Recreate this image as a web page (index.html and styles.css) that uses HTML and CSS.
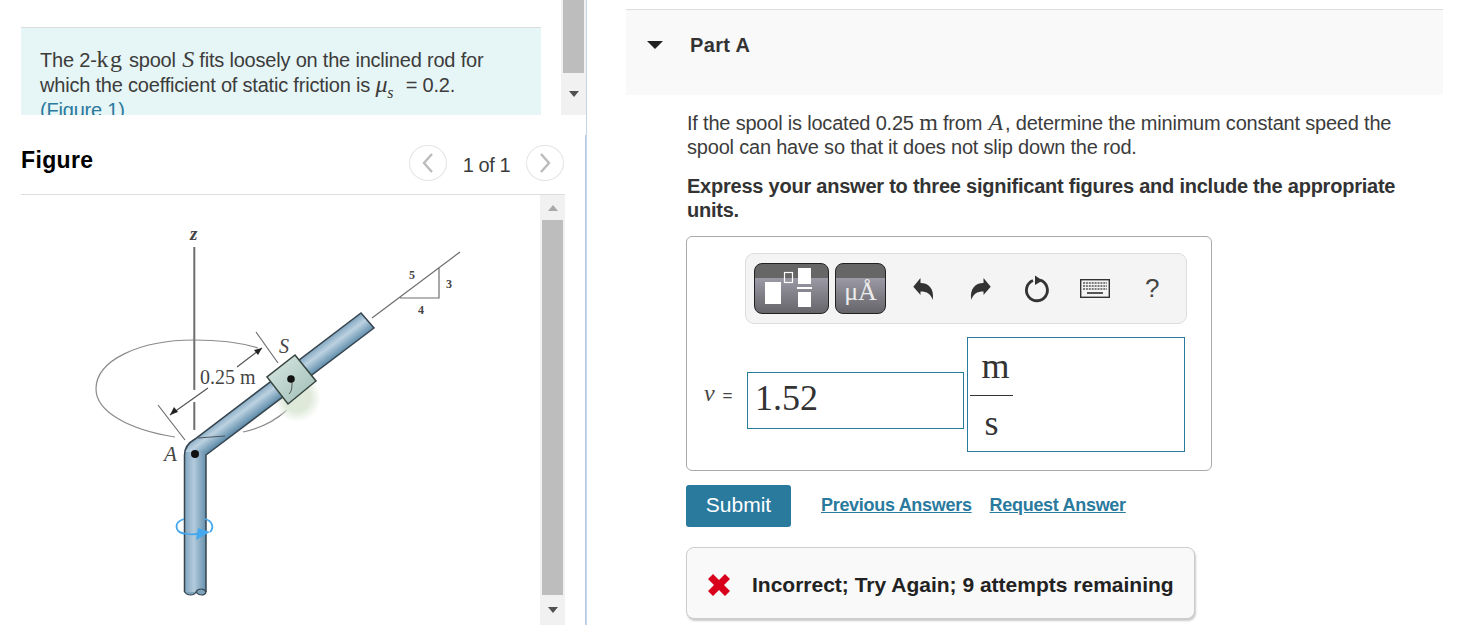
FILE: index.html
```html
<!DOCTYPE html>
<html lang="en">
<head>
<meta charset="utf-8">
<title>Part A</title>
<link rel="stylesheet" href="styles.css">
</head>
<body>
<div class="page">
  <section class="left">
    <div class="intro">
      <div class="intro-box">
        <p>The 2-<span class="rm kg">kg</span> spool <i class="mi mi-s">S</i> fits loosely on the inclined rod for which the coefficient of static friction is <i class="mi">μ<sub>s</sub></i> = 0.2.<br><a class="fig-link" href="#">(Figure 1)</a></p>
      </div>
      <div class="scroll scroll-top">
        <div class="thumb thumb-top"></div>
        <div class="arrow-zone"><span class="tri tri-down"></span></div>
      </div>
    </div>
    <div class="fig-head">
      <h2>Figure</h2>
      <div class="pager">
        <span class="circle"><svg width="14" height="22" viewBox="0 0 14 22"><path d="M11 2 L3 11 L11 20" fill="none" stroke="#bbb" stroke-width="2.4"/></svg></span>
        <span class="count">1 of 1</span>
        <span class="circle"><svg width="14" height="22" viewBox="0 0 14 22"><path d="M3 2 L11 11 L3 20" fill="none" stroke="#bbb" stroke-width="2.4"/></svg></span>
      </div>
    </div>
    <div class="fig-body">
      <svg class="diagram" width="519" height="430" viewBox="21 195 519 430">
        <defs>
          <linearGradient id="diag" gradientUnits="userSpaceOnUse" x1="361" y1="313" x2="373.5" y2="329.8">
            <stop offset="0" stop-color="#7fa5c0"/><stop offset=".4" stop-color="#bcd2e1"/><stop offset="1" stop-color="#5a89a8"/>
          </linearGradient>
          <linearGradient id="vert" gradientUnits="userSpaceOnUse" x1="184" y1="0" x2="206" y2="0">
            <stop offset="0" stop-color="#7ea3bd"/><stop offset=".45" stop-color="#b3cbdc"/><stop offset="1" stop-color="#6690ad"/>
          </linearGradient>
          <linearGradient id="spool" x1="0" y1="0" x2="1" y2="1">
            <stop offset="0" stop-color="#dbe9e4"/><stop offset="1" stop-color="#9dbcb5"/>
          </linearGradient>
          <radialGradient id="shade"><stop offset=".55" stop-color="#dfe9da"/><stop offset="1" stop-color="#dfe9da" stop-opacity="0"/></radialGradient>
        </defs>
        <g fill="none" stroke="#8a8a8a" stroke-width="1.2">
          <path d="M175 437 C130 430 96 412 96 389 C96 360 140 340 194 340 C220 340 242 343 258 348"/>
          <path d="M243 432 C262 428 276 420 287 410"/>
        </g>
        <circle cx="297" cy="398" r="24" fill="url(#shade)"/>
        <g stroke="#6e6e6e" fill="none">
          <path d="M194.300 247 V390 M194.300 402 V430" stroke-width="2"/>
          <path d="M372 318 L460 252 M400 298 H439 V268" stroke-width="1.200"/>
          <path d="M256 332 L278 363 M158 405 L185 440" stroke-width="1.200"/>
          <path d="M170 415 L208 388 M237 367 L262 348" stroke-width="1.200" stroke="#555"/>
        </g>
        <path d="M262 348 L254 350 L258 355 Z M170 415 L178 412 L174 407 Z" fill="#222"/>
        <path d="M195 439 L361 313 L374 328 L206 455 L184 455 C184 448 188 443 195 439 Z" fill="url(#diag)"/>
        <rect x="184" y="452" width="22" height="141" fill="url(#vert)"/>
        <path d="M185 592 C187 596 194 596 196 592 C199 596 205 596 206 592 C204 588 198 588 196 592" fill="#7ea3bd" stroke="#3a4852" stroke-width="1.200"/>
        <path d="M184.500 592 V455 C184.500 448 188 443 195 439 L361 313 L374 328 L206 455 V592" fill="none" stroke="#36444e" stroke-width="1.500"/>
        <path d="M198 438 L225 436" stroke="#4a5560" stroke-width="1" fill="none"/>
        <path d="M295 355 L316 381 L288 404 L267 377 Z" fill="url(#spool)" stroke="#37443f" stroke-width="1.500"/>
        <circle cx="291" cy="379" r="3.800" fill="#111"/>
        <path d="M292 382 C292 387 292 391 289 394" fill="none" stroke="#333" stroke-width=".8"/>
        <circle cx="195" cy="454" r="4" fill="#111"/>
        <path d="M184 534 C174 531 174 522 184 519 M205 519 C213 521 214 528 210 532 M180 532 C186 535 194 535 204 533" fill="none" stroke="#45a8ee" stroke-width="1.800"/>
        <path d="M198 528 L210 532 L196 540 Z" fill="#45a8ee"/>
        <text class="lbl-mid" x="200" y="384">0.25 m</text>
        <text class="lbl-it" x="279" y="353">S</text>
        <text class="lbl-z" x="190" y="240">z</text>
        <text class="lbl-it lbl-a" x="164" y="461">A</text>
        <text class="lbl-sm" x="409" y="279">5</text>
        <text class="lbl-sm" x="446" y="288">3</text>
        <text class="lbl-sm" x="418" y="314">4</text>
      </svg>
      <div class="scroll scroll-fig">
        <div class="arrow-zone zone-up"><span class="tri tri-up"></span></div>
        <div class="thumb thumb-fig"></div>
        <div class="arrow-zone zone-down"><span class="tri tri-down"></span></div>
      </div>
    </div>
  </section>

  <section class="right">
    <header class="part-head">
      <span class="tri tri-part"></span>
      <h2>Part A</h2>
    </header>
    <div class="part-body">
      <p class="q">If the spool is located 0.25 <span class="rm">m</span> from <i class="mi mi-a">A</i>, determine the minimum constant speed the spool can have so that it does not slip down the rod.</p>
      <p class="q strong">Express your answer to three significant figures and include the appropriate units.</p>
      <div class="answer">
        <div class="toolbar">
          <span class="tbtn tbtn-wide">
            <svg width="75" height="51" viewBox="754 263 75 51">
              <path d="M765 282 H781 V304 H765 Z M798 268 H811 V284 H798 Z M797 287 H812 V289 H797 Z M798 292 H811 V307 H798 Z" fill="#fff"/>
              <rect x="784.500" y="272.500" width="8" height="10" fill="none" stroke="#fff" stroke-width="1.200"/>
            </svg>
          </span>
          <span class="tbtn tbtn-unit">μÅ</span>
          <svg class="tool undo" width="24" height="26" viewBox="910 275 24 26"><path d="M912.300 285.700 L919.500 277 V282 C928 282 933.500 288 931.700 299 C930 293 926 290.500 919.500 290.500 V294 Z" fill="#333"/></svg>
          <svg class="tool redo" width="24" height="26" viewBox="910 275 24 26"><path d="M931.700 285.700 L924.500 277 V282 C916 282 910.500 288 912.300 299 C914 293 918 290.500 924.500 290.500 V294 Z" fill="#333"/></svg>
          <svg class="tool reset" width="28" height="28" viewBox="0 0 28 28"><path d="M10 5.500 A10.500 10.500 0 1 0 17 5.200" fill="none" stroke="#333" stroke-width="2.800"/><path d="M12 0.500 L19.500 5.500 L12 10 Z" fill="#333"/></svg>
          <svg class="tool kbd" width="30" height="19" viewBox="0 0 30 19"><rect x=".7" y=".7" width="28.600" height="17.600" fill="#f4f4f4" stroke="#333" stroke-width="1.400"/><path d="M3 4 H27 M3 7 H27 M3 10 H27" stroke="#555" stroke-width="1.600" stroke-dasharray="2 .9" fill="none"/><path d="M7 14 H23" stroke="#555" stroke-width="2" fill="none"/></svg>
          <span class="help">?</span>
        </div>
        <div class="entry">
          <span class="var"><i class="mi">v</i> =</span>
          <div class="field value">1.52</div>
          <div class="field units">
            <div class="frac">
              <span class="num">m</span>
              <span class="den">s</span>
            </div>
          </div>
        </div>
      </div>
      <div class="actions">
        <button class="submit" type="button">Submit</button>
        <a href="#" class="act-link">Previous Answers</a>
        <a href="#" class="act-link">Request Answer</a>
      </div>
      <div class="feedback">
        <svg width="22" height="22" viewBox="0 0 22 22"><path d="M5 0 L11 6 L17 0 L22 5 L16 11 L22 17 L17 22 L11 16 L5 22 L0 17 L6 11 L0 5 Z" fill="#d9001b"/></svg>
        <span>Incorrect; Try Again; 9 attempts remaining</span>
      </div>
    </div>
  </section>
</div>
</body>
</html>
```
FILE: styles.css
```css
html, body { margin: 0; padding: 0; background: #fff; }
body { font-family: "Liberation Sans", Arial, sans-serif; color: #3c3c3c; overflow: hidden; }
p, h2 { margin: 0; }
a { color: #2a7a9e; }
.page { display: flex; width: 1480px; height: 625px; overflow: hidden; }

.left { position: relative; width: 586px; height: 625px; border-right: 1px solid #c3d5e6; flex: none; }
.left::after { content: ""; position: absolute; right: 0; top: 135px; bottom: 0; width: 1px; background: #b8cde0; }

.intro { display: flex; height: 115px; padding-left: 21px; }
.intro-box { width: 520px; height: 87px; margin-top: 27px; border-top: 1px solid #ddd; background: #e6f5f5; overflow: hidden; }
.intro-box p { width: 470px; padding: 20px 0 0 19px; font-size: 20px; line-height: 25px; letter-spacing: -.2px; }
.fig-link { text-decoration: none; }
.rm { font-family: "Liberation Serif", serif; font-size: 24px; line-height: 0; }
.kg { letter-spacing: 1.5px; }
.mi { font-family: "Liberation Serif", serif; font-style: italic; font-size: 24px; line-height: 0; }
.mi-s { margin-left: 1px; }
.mi-a { margin: 0 2px 0 1px; }
sub { font-size: 16px; line-height: 0; margin-right: 7px; }

.scroll { background: #f1f1f1; display: flex; flex-direction: column; flex: none; }
.scroll-top { width: 25px; margin-left: 20px; height: 115px; }
.thumb { background: #bdbdbd; margin: 0 2px; }
.thumb-top { width: 21px; height: 73px; }
.arrow-zone { display: flex; align-items: center; justify-content: center; flex: 1; }
.tri { display: block; width: 0; height: 0; border-left: 5.500px solid transparent; border-right: 5.500px solid transparent; }
.tri-down { border-top: 6px solid #505050; }
.tri-up { border-bottom: 6px solid #a8a8a8; }

.fig-head { display: flex; justify-content: space-between; box-sizing: border-box; width: 544px; height: 80px; margin-left: 21px; padding-right: 1px; border-bottom: 1px solid #ddd; }
.fig-head h2 { font-size: 23px; line-height: 26px; font-weight: 700; letter-spacing: .35px; color: #000; margin-top: 32px; }
.pager { display: flex; align-items: center; height: 36px; margin-top: 30px; }
.circle { display: flex; align-items: center; justify-content: center; width: 38px; height: 36px; box-sizing: border-box; border: 1px solid #e4e4e4; border-radius: 50%; }
.count { width: 79px; text-align: center; font-size: 20px; letter-spacing: -.4px; margin-top: 5px; }

.fig-body { display: flex; height: 430px; margin-left: 21px; width: 544px; }
.diagram { display: block; flex: none; }
.scroll-fig { width: 25px; height: 430px; }
.zone-up { flex: none; height: 25px; }
.thumb-fig { height: 375px; flex: none; width: 21px; }
.zone-down { flex: none; height: 30px; }
.lbl-mid { font-family: "Liberation Serif", serif; font-size: 20px; fill: #444; }
.lbl-it { font-family: "Liberation Serif", serif; font-style: italic; font-size: 20px; fill: #444; }
.lbl-a { font-size: 21px; }
.lbl-z { font-family: "Liberation Serif", serif; font-style: italic; font-weight: 700; font-size: 19px; fill: #444; }
.lbl-sm { font-family: "Liberation Serif", serif; font-weight: 700; font-size: 12px; fill: #444; }

.right { flex: none; width: 817px; margin-left: 39px; padding-top: 9px; }
.part-head { display: flex; height: 86px; box-sizing: border-box; border-top: 1px solid #ddd; background: #f9f9f9; padding: 23px 0 0 21px; }
.part-head h2 { font-size: 20px; line-height: 24px; font-weight: 700; letter-spacing: .35px; color: #333; margin-left: 27px; }
.tri-part { margin-top: 8px; border-left: 8px solid transparent; border-right: 8px solid transparent; border-top: 8px solid #222; }
.part-body { padding: 16px 0 0 60px; }
.q { width: 724px; margin-left: 1px; font-size: 20px; line-height: 24px; letter-spacing: -.2px; margin-bottom: 15px; }
.strong { font-weight: 700; color: #333; letter-spacing: -.23px; margin-bottom: 14px; }

.answer { box-sizing: border-box; width: 526px; height: 235px; border: 1px solid #aaa; border-radius: 6px; padding: 16px 0 0 17px; }
.toolbar { display: flex; align-items: center; box-sizing: border-box; width: 442px; height: 71px; margin-left: 41px; padding-left: 8px; background: #f4f4f4; border: 1px solid #ddd; border-radius: 9px; }
.tbtn { display: flex; align-items: center; justify-content: center; box-sizing: border-box; height: 51px; border: 1px solid #222; border-radius: 8px; background: linear-gradient(#666 0, #666 28%, #9b99a4 29%, #65656a 100%); overflow: hidden; }
.tbtn-wide { width: 75px; }
.tbtn-wide svg { flex: none; }
.tbtn-unit { width: 51px; margin-left: 6px; font-family: "Liberation Serif", serif; font-size: 26px; color: #ececec; padding-top: 6px; }
.tool { flex: none; display: block; }
.undo { margin-left: 25px; }
.redo { margin-left: 34px; }
.reset { margin-left: 30px; }
.kbd { margin-left: 29px; }
.help { margin-left: 35px; font-size: 26px; color: #444; }

.entry { display: flex; margin-top: 13px; }
.var { width: 43px; margin-top: 47px; font-size: 17px; line-height: 24px; color: #444; word-spacing: 3px; }
.field { box-sizing: border-box; border: 1px solid #2a7a9e; font-family: "Liberation Serif", serif; font-size: 36px; color: #333; }
.value { width: 217px; height: 57px; margin-top: 35px; padding-left: 7px; line-height: 51px; }
.units { width: 218px; height: 115px; margin-left: 3px; padding-left: 2px; }
.frac { display: flex; flex-direction: column; width: 43px; text-align: center; }
.num { height: 57px; line-height: 57px; border-bottom: 1px solid #333; padding-left: 8px; }
.den { height: 56px; line-height: 54px; }

.actions { display: flex; align-items: center; margin-top: 14px; }
.submit { width: 105px; height: 42px; padding: 0 0 2px; border: 0; border-radius: 3px; background: #2a7a9e; color: #fff; font: 21px "Liberation Sans", Arial, sans-serif; }
.act-link { font-size: 18px; font-weight: 700; margin-left: 30px; margin-top: -2px; letter-spacing: -.3px; }
.act-link + .act-link { margin-left: 18px; }

.feedback { display: flex; align-items: center; box-sizing: border-box; width: 509px; height: 72px; margin-top: 20px; padding: 3px 0 0 21px; background: #f9f9f9; border: 1px solid #ccc; border-radius: 8px; box-shadow: 1px 2px 2px #ccc; }
.feedback span { margin-left: 22px; font-size: 21px; font-weight: 700; color: #222; }
```
